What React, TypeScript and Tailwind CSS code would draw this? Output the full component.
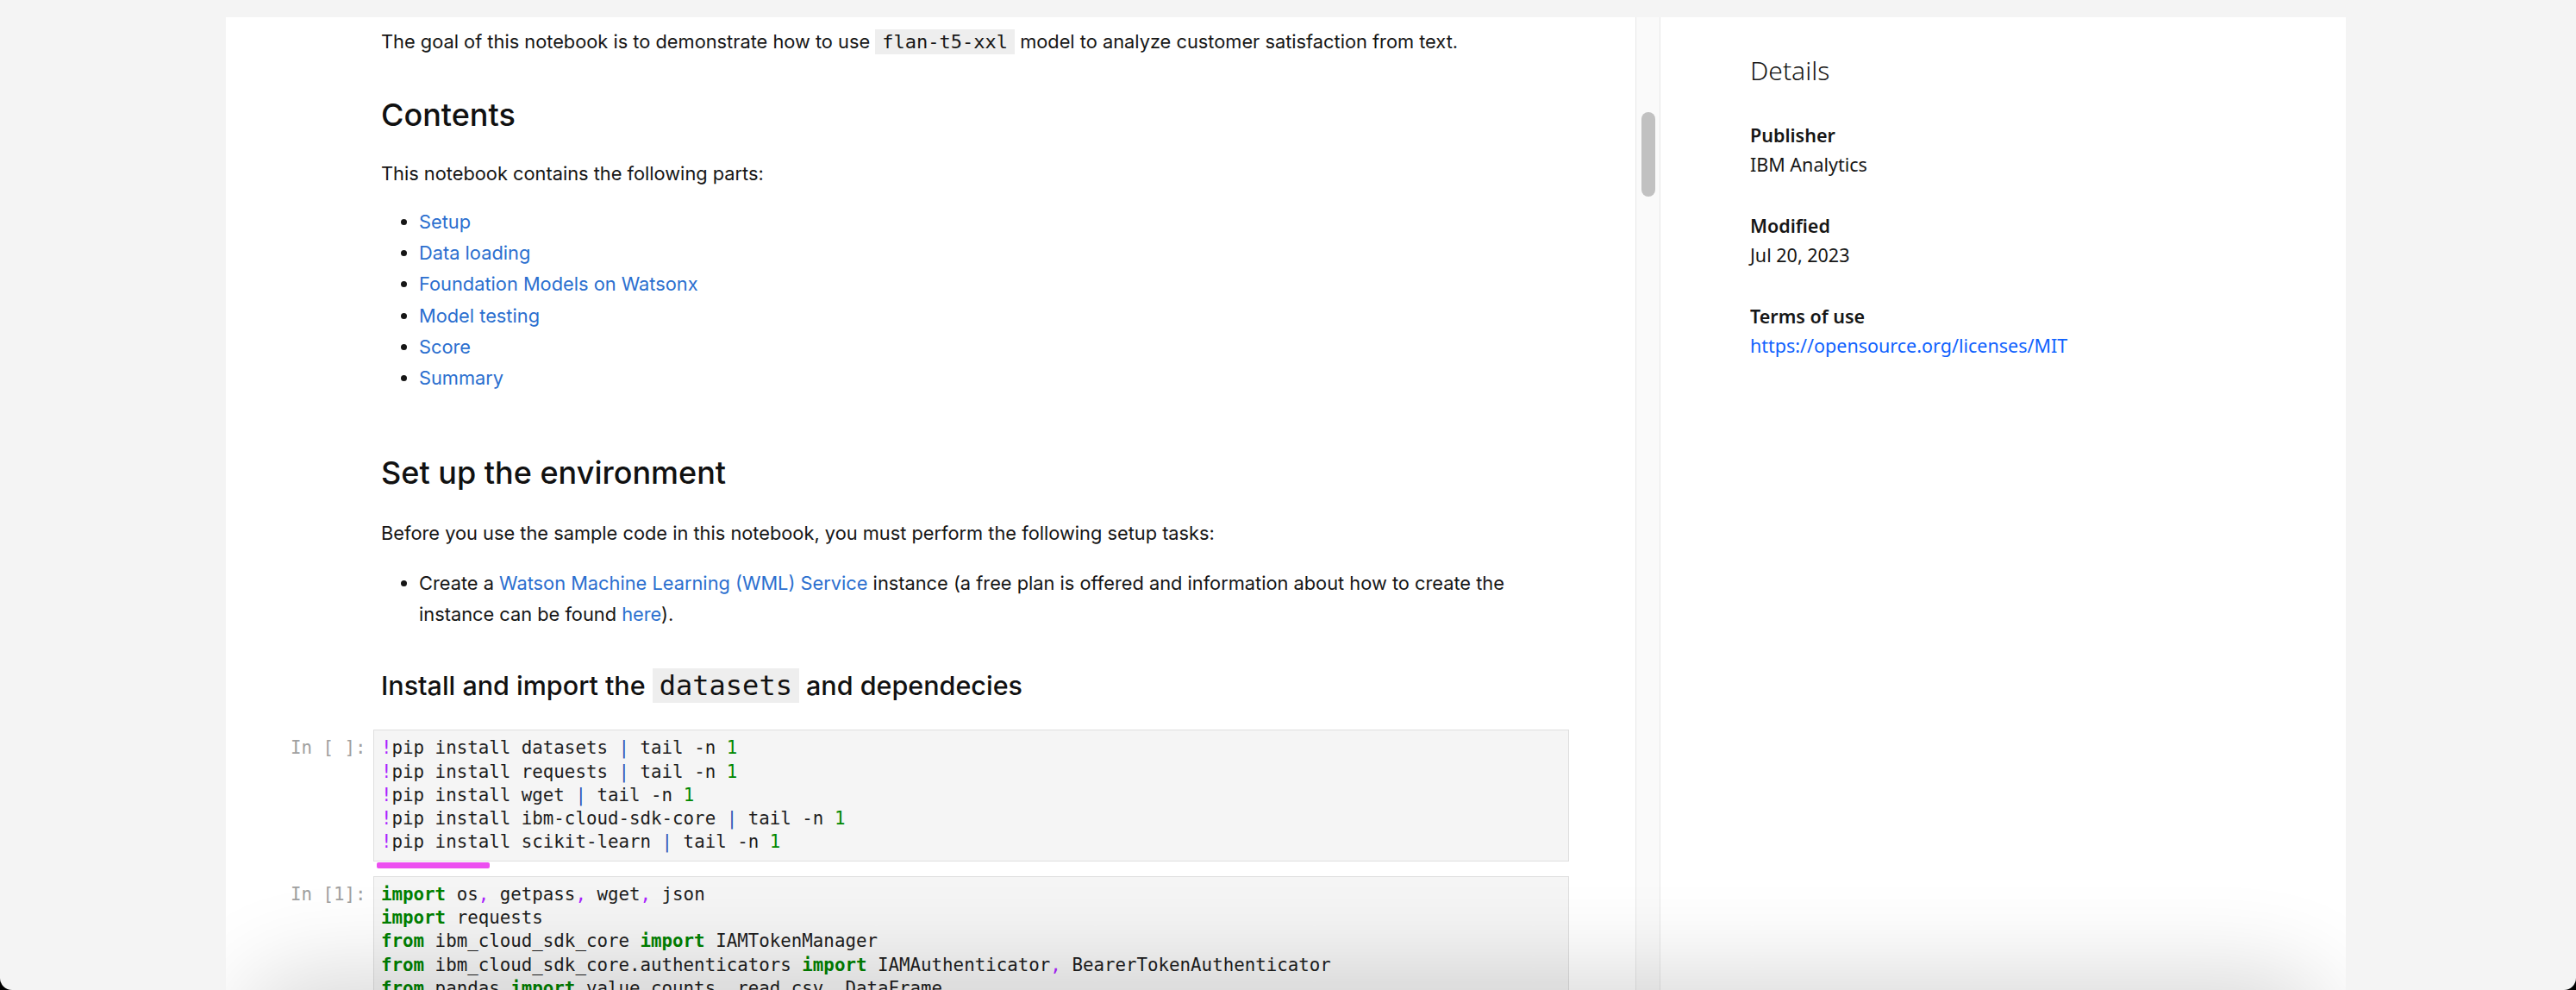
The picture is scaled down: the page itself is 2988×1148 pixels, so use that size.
import React from "react";

const K = ({ children }: { children: React.ReactNode }) => (
  <span className="font-bold text-[#008000]">{children}</span>
);
const Pu = ({ children }: { children: React.ReactNode }) => (
  <span className="text-[#aa22ff]">{children}</span>
);
const N = ({ children }: { children: React.ReactNode }) => (
  <span className="text-[#008800]">{children}</span>
);
const Pipe = () => <span className="text-[#2d57b8]">|</span>;

function CodeCell({ prompt, children }: { prompt: string; children: React.ReactNode }) {
  return (
    <div className="flex font-['DejaVu_Sans_Mono',monospace] text-[20.8px] leading-[27.3px]">
      <div className="w-[96px] shrink-0 pr-[9px] pt-[8px] text-right text-[#a0a0a0] whitespace-pre">
        {prompt}
      </div>
      <div className="flex-1 border border-[#dfdfdf] bg-[#f5f5f5] px-[8px] py-[7px] text-[#1d1d1d] whitespace-pre">
        {children}
      </div>
    </div>
  );
}

function PipLine({ pkg }: { pkg: string }) {
  return (
    <div>
      <Pu>!</Pu>pip install {pkg} <Pipe /> tail -n <N>1</N>
    </div>
  );
}

function Link({ children }: { children: React.ReactNode }) {
  return <a className="text-[#2b6fcf]">{children}</a>;
}

export default function App() {
  return (
    <div className="w-[2988px] h-[1148px] bg-black overflow-hidden">
      <div className="h-full bg-[#f4f4f4] rounded-b-[14px] pt-[20px] pl-[262px] pr-[267px]">
        <div className="relative flex h-[1128px] bg-white overflow-hidden">
          {/* Notebook pane */}
          <div className="w-[1635px] shrink-0 overflow-hidden pl-[75px] pt-[10px]">
            <div className="w-[1483px]">
              <div className="ml-[96px] pl-[9px] pr-[8px] font-['Inter',sans-serif] text-[21.8px] leading-[36px] text-[#161616]">
                <p>
                  The goal of this notebook is to demonstrate how to use{" "}
                  <code className="inline-block bg-[#eeeeee] px-[8px] font-['DejaVu_Sans_Mono',monospace] text-[22px] leading-[29px]">
                    flan-t5-xxl
                  </code>{" "}
                  model to analyze customer satisfaction from text.
                </p>
                <h2 className="mt-[45px] text-[36px] leading-[44px] font-medium text-[#111]">Contents</h2>
                <p className="mt-[28px]">This notebook contains the following parts:</p>
                <ul className="mt-[20px] list-disc pl-[44px] leading-[36.2px]">
                  <li><Link>Setup</Link></li>
                  <li><Link>Data loading</Link></li>
                  <li><Link>Foundation Models on Watsonx</Link></li>
                  <li><Link>Model testing</Link></li>
                  <li><Link>Score</Link></li>
                  <li><Link>Summary</Link></li>
                </ul>
                <h2 className="mt-[70px] text-[36px] leading-[44px] font-medium text-[#111]">
                  Set up the environment
                </h2>
                <p className="mt-[30px]">
                  Before you use the sample code in this notebook, you must perform the following setup tasks:
                </p>
                <ul className="mt-[22px] list-disc pl-[44px]">
                  <li>
                    Create a <Link>Watson Machine Learning (WML) Service</Link> instance (a free plan is offered and
                    information about how to create the instance can be found <Link>here</Link>).
                  </li>
                </ul>
                <h3 className="mt-[44px] text-[30.5px] leading-[42px] font-medium text-[#111]">
                  Install and import the{" "}
                  <code className="inline-block bg-[#eeeeee] px-[8px] font-['DejaVu_Sans_Mono',monospace] text-[32px] leading-[40px] font-normal">
                    datasets
                  </code>{" "}
                  and dependecies
                </h3>
              </div>

              <div className="mt-[30px]">
                <CodeCell prompt="In [ ]:">
                  <PipLine pkg="datasets" />
                  <PipLine pkg="requests" />
                  <PipLine pkg="wget" />
                  <PipLine pkg="ibm-cloud-sdk-core" />
                  <PipLine pkg="scikit-learn" />
                </CodeCell>
                <div className="ml-[100px] mt-[1px] h-[7px] w-[131px] rounded-[2px] bg-[#ec4ff0]" />
                <div className="mt-[9px]">
                  <CodeCell prompt="In [1]:">
                    <div>
                      <K>import</K> os<Pu>,</Pu> getpass<Pu>,</Pu> wget<Pu>,</Pu> json
                    </div>
                    <div>
                      <K>import</K> requests
                    </div>
                    <div>
                      <K>from</K> ibm_cloud_sdk_core <K>import</K> IAMTokenManager
                    </div>
                    <div>
                      <K>from</K> ibm_cloud_sdk_core.authenticators <K>import</K> IAMAuthenticator<Pu>,</Pu>{" "}
                      BearerTokenAuthenticator
                    </div>
                    <div>
                      <K>from</K> pandas <K>import</K> value_counts<Pu>,</Pu> read_csv<Pu>,</Pu> DataFrame
                    </div>
                    <div>
                      <K>from</K> sklearn.metrics <K>import</K> f1_score<Pu>,</Pu> accuracy_score
                    </div>
                  </CodeCell>
                </div>
              </div>
            </div>
          </div>

          {/* Scroll track */}
          <div className="w-[29px] shrink-0 border-l border-r border-[#e8e8e8] bg-[#fafafa] pl-[6px] pt-[110px]">
            <div className="h-[98px] w-[16px] rounded-full bg-[#c1c1c1]" />
          </div>

          {/* Details pane */}
          <div className="flex-1 pl-[104px] pt-[42px] font-['Noto_Sans',sans-serif] text-[#161616]">
            <div className="text-[30px] leading-[40px] font-light">Details</div>
            <div className="mt-[40px]">
              <div className="text-[21.5px] leading-[30px] font-semibold">Publisher</div>
              <div className="mt-[4px] text-[21.5px] leading-[30px]">IBM Analytics</div>
            </div>
            <div className="mt-[41px]">
              <div className="text-[21.5px] leading-[30px] font-semibold">Modified</div>
              <div className="mt-[4px] text-[21.5px] leading-[30px]">Jul 20, 2023</div>
            </div>
            <div className="mt-[41px]">
              <div className="text-[21.5px] leading-[30px] font-semibold">Terms of use</div>
              <div className="mt-[4px] text-[21.5px] leading-[30px] text-[#0f62fe]">
                https://opensource.org/licenses/MIT
              </div>
            </div>
          </div>

          {/* bottom shadow from element below */}
          <div className="absolute left-[60px] right-[60px] top-[1150px] h-[60px] rounded-[60px] shadow-[0_0_110px_40px_rgba(0,0,0,0.16)]" />
        </div>
      </div>
    </div>
  );
}
